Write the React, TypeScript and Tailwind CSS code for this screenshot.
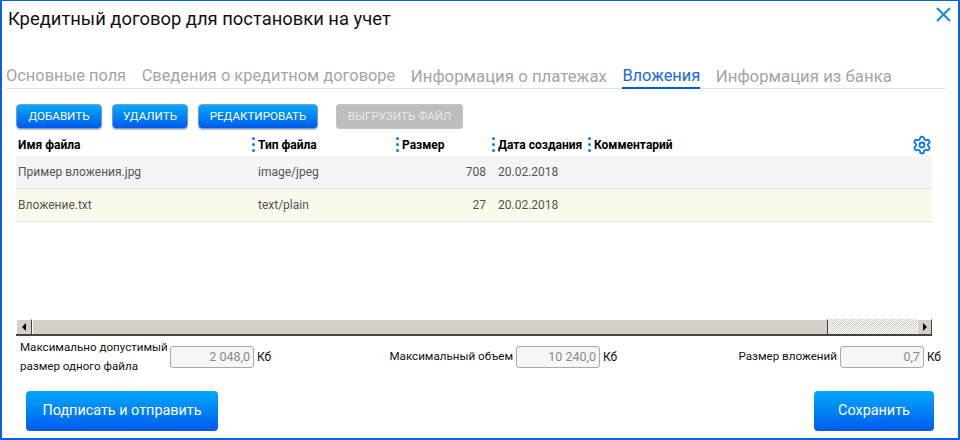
import { Settings } from "lucide-react";

const tabs = [
  { name: "Основные поля", size: "text-[16.4px]" },
  { name: "Сведения о кредитном договоре", size: "text-[16.4px]" },
  { name: "Информация о платежах", size: "text-[16.8px]" },
  { name: "Вложения", size: "text-[16.4px]", active: true },
  { name: "Информация из банка", size: "text-[16.8px]" },
];

const columns = ["Имя файла", "Тип файла", "Размер", "Дата создания", "Комментарий"];

const rows = [
  { name: "Пример вложения.jpg", type: "image/jpeg", size: "708", date: "20.02.2018", bg: "bg-[#f4f4f4]" },
  { name: "Вложение.txt", type: "text/plain", size: "27", date: "20.02.2018", bg: "bg-[#fafaec]" },
];

const blueButton =
  "h-[25px] rounded-[4px] border border-[#7d9cc4] bg-gradient-to-b from-[#05a8fb] to-[#0059ec] text-white text-[11.6px] shadow-[0_1px_1px_rgba(0,0,0,0.25)]";

function Dots() {
  return (
    <span className="flex h-[15px] w-[3px] flex-col justify-between">
      <span className="size-[3px] rounded-full bg-[#0f74ee]" />
      <span className="size-[3px] rounded-full bg-[#0f74ee]" />
      <span className="size-[3px] rounded-full bg-[#0f74ee]" />
    </span>
  );
}

function SizeField({ value }: { value: string }) {
  return (
    <div className="flex items-center">
      <div className="h-[22px] w-[84px] rounded-[3px] border border-[#a9a9a9] bg-[#f6f6f6] pr-[3px] text-right text-[12.5px] leading-[20px] text-[#8a8a8a]">
        {value}
      </div>
      <span className="ml-[3px] text-[12px] text-[#111]">Кб</span>
    </div>
  );
}

export default function App() {
  return (
    <div className="flex h-[440px] w-[960px] flex-col border-2 border-t border-[#0f5fdc] bg-white font-['Roboto',sans-serif]">
      {/* Title */}
      <div className="flex h-[36px] items-start justify-between pl-[6px] pr-[7px]">
        <h1 className="pt-[5px] text-[18.4px] leading-[26px] text-[#111]">
          Кредитный договор для постановки на учет
        </h1>
        <svg className="mt-[6px] size-[15px] text-[#1588ec]" viewBox="0 0 15 15" fill="none" stroke="currentColor" strokeWidth="2">
          <path d="M1 1l13 13M14 1L1 14" />
        </svg>
      </div>

      {/* Tabs */}
      <div className="mt-[25px] ml-[4px] mr-[13px] flex h-[27px] gap-[15.5px] border-b border-[#e2e2e2]">
        {tabs.map((tab) => (
          <div
            key={tab.name}
            className={
              tab.active
                ? `h-[27px] border-b-2 border-[#0059ec] leading-[28px] text-[#1a66e8] ${tab.size}`
                : `h-[27px] leading-[28px] text-[#a5a5a5] ${tab.size}`
            }
          >
            {tab.name}
          </div>
        ))}
      </div>

      {/* Toolbar */}
      <div className="mt-[15px] ml-[14px] flex">
        <button className={`${blueButton} w-[86px]`}>ДОБАВИТЬ</button>
        <button className={`${blueButton} ml-[10px] w-[76px]`}>УДАЛИТЬ</button>
        <button className={`${blueButton} ml-[10px] w-[120px]`}>РЕДАКТИРОВАТЬ</button>
        <button className="ml-[18px] h-[25px] w-[127px] rounded-[3px] border border-[#c4c4c4] bg-[#bdbdbd] text-[11.6px] text-[#e6e6e6]">
          ВЫГРУЗИТЬ ФАЙЛ
        </button>
      </div>

      {/* Table */}
      <div className="ml-[14px] w-[916px]">
        <div className="relative grid h-[27px] grid-cols-[236px_144px_96px_96px_1fr] items-center pt-[4px] text-[12px] font-bold text-black">
          {columns.map((col, i) => (
            <div key={col} className="flex items-center">
              {i > 0 && <Dots />}
              <span className={i > 0 ? "ml-[3px]" : "ml-[2px]"}>{col}</span>
            </div>
          ))}
          <Settings className="absolute right-0 top-[6px] size-[20px] text-[#0f74ee]" strokeWidth={2.2} />
        </div>
        {rows.map((row) => (
          <div
            key={row.name}
            className={`grid h-[33px] grid-cols-[242px_143px_97px_1fr] items-center border-b border-[#e4e4e4] text-[12px] text-[#555] ${row.bg}`}
          >
            <span className="pl-[2px]">{row.name}</span>
            <span>{row.type}</span>
            <span className="pr-[12px] text-right">{row.size}</span>
            <span>{row.date}</span>
          </div>
        ))}
      </div>

      {/* Horizontal scrollbar */}
      <div className="mt-[97px] ml-[14px] flex h-[17px] w-[916px] border-b-2 border-[#444] bg-[#d4d0c8]">
        <div className="flex w-[16px] items-center justify-center border-t border-l border-r border-t-white border-l-white border-r-[#444]">
          <span className="border-y-[4px] border-r-[4px] border-y-transparent border-r-black" />
        </div>
        <div className="w-[796px] border-t border-l border-r border-t-white border-l-white border-r-[#444]" />
        <div className="flex-1 bg-[repeating-conic-gradient(#d4d0c8_0_25%,#fff_0_50%)] bg-[length:2px_2px]" />
        <div className="flex w-[15px] items-center justify-center border-t border-l border-r border-t-white border-l-white border-r-[#444]">
          <span className="border-y-[4px] border-l-[4px] border-y-transparent border-l-black" />
        </div>
      </div>

      {/* Limits */}
      <div className="mt-[2px] ml-[18px] mr-[17px] flex items-center justify-between text-[11.6px] text-[#111]">
        <div className="flex items-center">
          <div className="w-[150px] whitespace-nowrap leading-[19px]">
            Максимально допустимый
            <br />
            размер одного файла
          </div>
          <SizeField value="2 048,0" />
        </div>
        <div className="mr-[3px] flex items-center">
          <span className="mr-[3px]">Максимальный объем</span>
          <SizeField value="10 240,0" />
        </div>
        <div className="flex items-center">
          <span className="mr-[3px]">Размер вложений</span>
          <SizeField value="0,7" />
        </div>
      </div>

      {/* Actions */}
      <div className="mt-[15px] ml-[24px] mr-[24px] flex justify-between">
        <button className="h-[40px] w-[192px] rounded-[4px] bg-gradient-to-b from-[#05a8fb] to-[#0059ec] text-[14.4px] text-white">
          Подписать и отправить
        </button>
        <button className="h-[40px] w-[120px] rounded-[4px] bg-gradient-to-b from-[#05a8fb] to-[#0059ec] text-[14.4px] text-white">
          Сохранить
        </button>
      </div>
    </div>
  );
}
